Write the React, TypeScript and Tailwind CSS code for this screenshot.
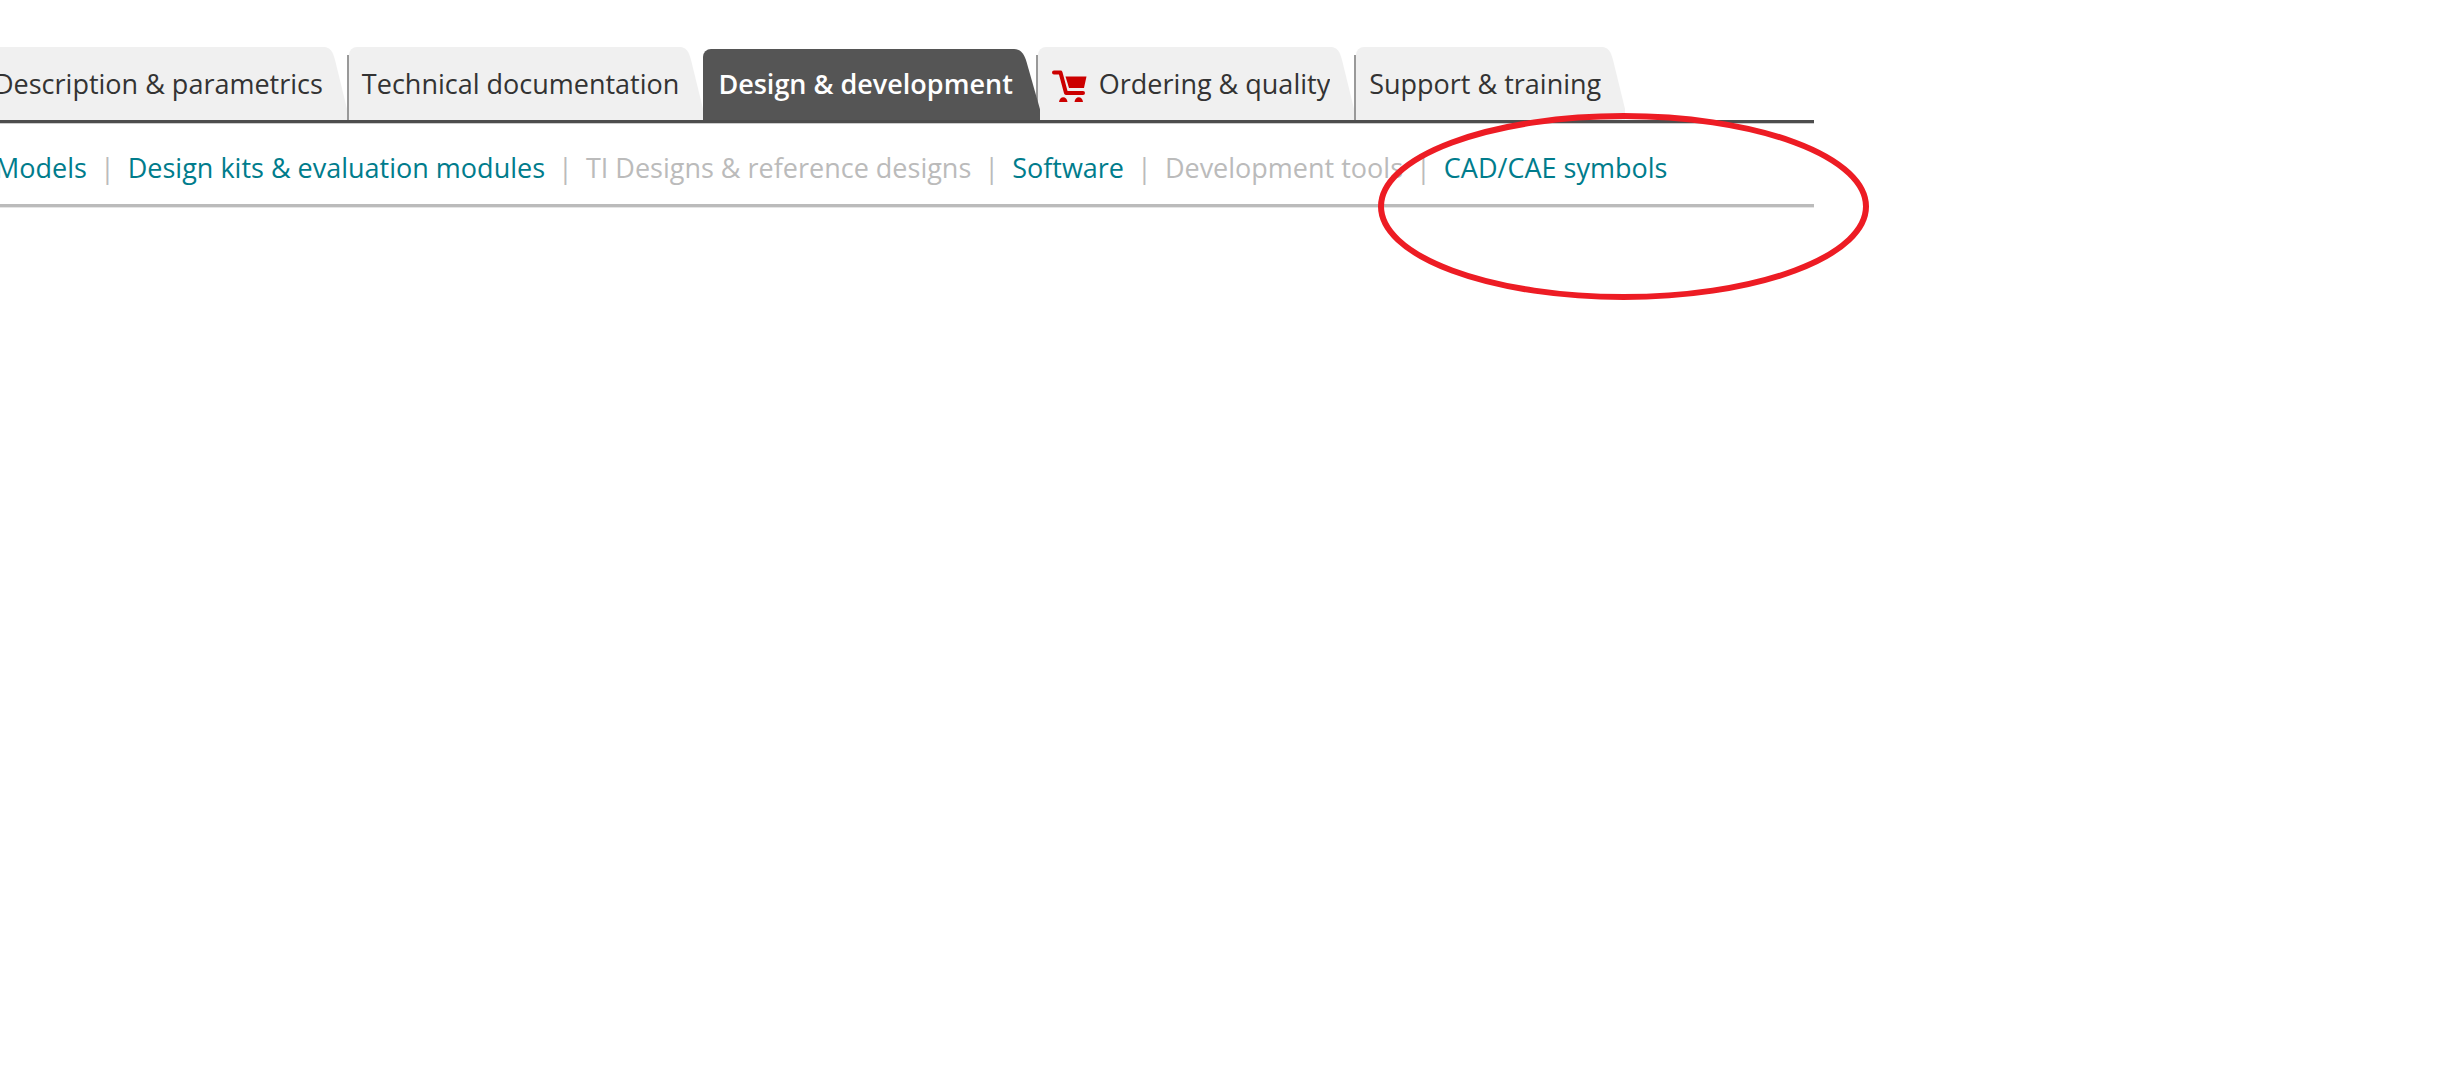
import clsx from "clsx";

interface Tab {
  label: string;
  active?: boolean;
  cart?: boolean;
}

interface SubLink {
  label: string;
  disabled?: boolean;
}

const tabs: Tab[] = [
  { label: "Description & parametrics" },
  { label: "Technical documentation" },
  { label: "Design & development", active: true },
  { label: "Ordering & quality", cart: true },
  { label: "Support & training" },
];

const subLinks: SubLink[] = [
  { label: "Models" },
  { label: "Design kits & evaluation modules" },
  { label: "TI Designs & reference designs", disabled: true },
  { label: "Software" },
  { label: "Development tools", disabled: true },
  { label: "CAD/CAE symbols" },
];

function CartIcon() {
  return (
    <svg
      className="mt-1 mr-3 h-8 w-9 shrink-0"
      viewBox="0 0 36 32"
      fill="#cc0000"
      aria-hidden="true"
    >
      <path
        d="M3 2.500H9.500L15 23H32"
        fill="none"
        stroke="#cc0000"
        strokeWidth="4"
        strokeLinecap="round"
        strokeLinejoin="round"
      />
      <path d="M14.500 6.500H35.500L33 18H18Z" />
      <path d="M8 32C8.500 25.500 16 25.500 16.500 32Z" />
      <path d="M23.500 32C24 25.500 31.500 25.500 32 32Z" />
    </svg>
  );
}

function TabItem({ label, active, cart }: Tab) {
  return (
    <li className={clsx("flex", active ? "z-10 -mr-1 h-[71px]" : "h-[73px]")}>
      {!active && <span className="mt-2 w-[2px] bg-[#999999]" />}
      <a
        href="#"
        aria-current={active ? "page" : undefined}
        className={clsx(
          "flex items-center whitespace-nowrap rounded-tl-lg",
          active
            ? "bg-[#555555] pb-0.5 pl-[15px] font-semibold text-white"
            : "bg-[#f0f0f0] pl-[13px] text-[#333333]",
        )}
      >
        {cart && <CartIcon />}
        {label}
      </a>
      <svg
        className={clsx(
          "h-full",
          active ? "w-[27px] text-[#555555]" : "w-6 text-[#f0f0f0]",
        )}
        viewBox="0 0 24 73"
        preserveAspectRatio="none"
        fill="currentColor"
        aria-hidden="true"
      >
        <path d="M0 0H1C7 0 10 5 12 13L24 62V73H0Z" />
      </svg>
    </li>
  );
}

export default function App() {
  return (
    <div className="relative min-h-screen overflow-hidden bg-white font-['Open_Sans',sans-serif] text-[27px] leading-9">
      <div className="w-full max-w-[1814px] pt-[47px]">
        <nav
          aria-label="Product"
          className="border-b-[3px] border-[#4d4d4d] shadow-[0_1px_0_#cccccc]"
        >
          <ul className="-ml-[21px] flex items-end">
            {tabs.map((tab) => (
              <TabItem key={tab.label} {...tab} />
            ))}
          </ul>
        </nav>
        <nav
          aria-label="Design and development"
          className="border-b-[3px] border-[#bbbbbb] pt-[27px] pb-[18px] shadow-[0_1px_0_#e5e5e5]"
        >
          <ul className="-ml-[5px] flex whitespace-nowrap">
            {subLinks.map(({ label, disabled }, i) => (
              <li key={label} className="flex">
                {i > 0 && (
                  <span className="mx-[13px] text-[#bbbbbb]">|</span>
                )}
                {disabled ? (
                  <span className="text-[#bbbbbb]">{label}</span>
                ) : (
                  <a href="#" className="text-[#007c8c]">
                    {label}
                  </a>
                )}
              </li>
            ))}
          </ul>
        </nav>
      </div>
      {/* highlight around the CAD/CAE link */}
      <svg
        className="pointer-events-none absolute top-[113px] left-[1378px] z-20 h-[187px] w-[491px]"
        viewBox="0 0 491 187"
        fill="none"
        aria-hidden="true"
      >
        <ellipse
          cx="245.5"
          cy="93.5"
          rx="242.5"
          ry="90.5"
          stroke="#ed1c24"
          strokeWidth="6"
        />
      </svg>
    </div>
  );
}
